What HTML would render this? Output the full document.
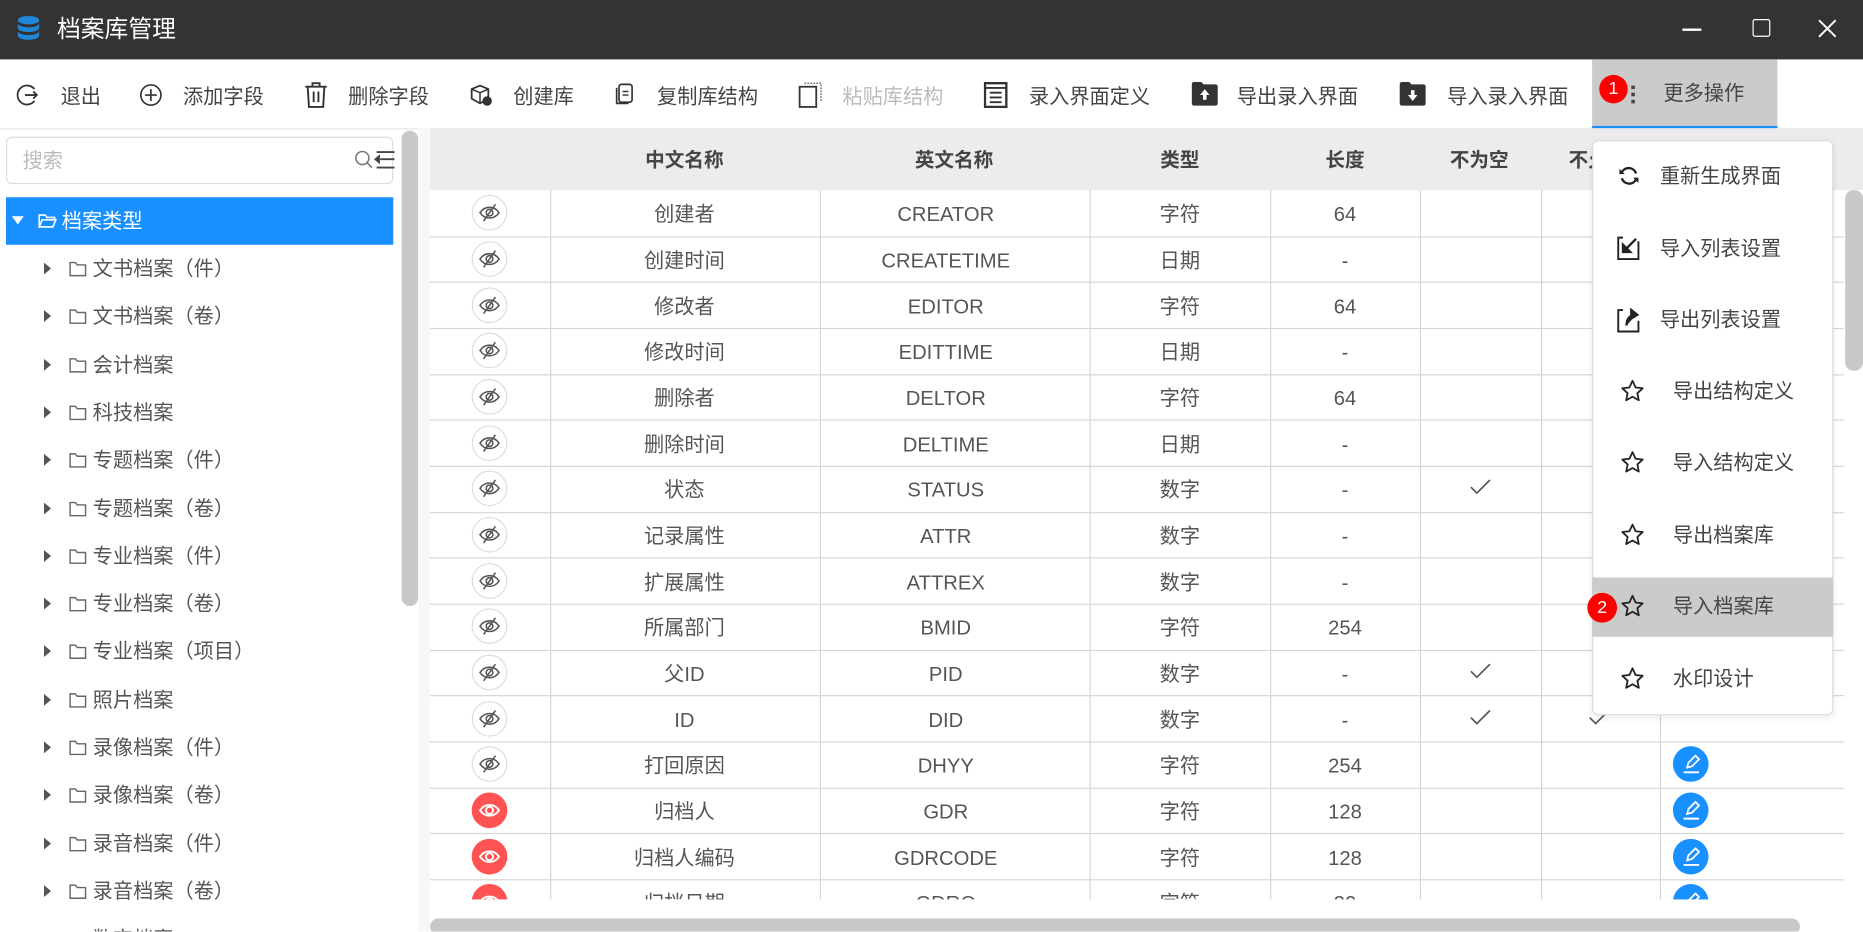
<!DOCTYPE html>
<html><head><meta charset="utf-8">
<style>
*{margin:0;padding:0;box-sizing:border-box}
html,body{width:1863px;height:932px;overflow:hidden;background:#fff}
#w{position:absolute;left:0;top:0;width:1568px;height:784px;transform:scale(1.18814);transform-origin:0 0;font-family:"Liberation Sans","Noto Sans CJK SC",sans-serif;color:#555;overflow:hidden;line-height:22px}
.a{position:absolute}
.tb{font-size:17px;color:#444;top:71px;white-space:nowrap}
.ic{position:absolute;top:68px}
.tree{position:absolute;left:0;font-size:17px;color:#555;white-space:nowrap}
.tri{position:absolute;width:0;height:0;border-top:5px solid transparent;border-bottom:5px solid transparent;border-left:6px solid #555}
.hd{position:absolute;top:124px;font-size:16.5px;font-weight:bold;color:#444;transform:translateX(-50%);white-space:nowrap}
.c{position:absolute;font-size:17px;color:#555;transform:translateX(-50%);white-space:nowrap;line-height:22px;height:22px}
.hl{position:absolute;left:362px;width:1190px;height:1px;background:#d6d6d6}
.vl{position:absolute;top:160px;width:1px;height:597px;background:#d6d6d6}
.eye{position:absolute;left:397px;width:30px;height:30px;border-radius:50%;border:1px solid #ddd;background:#fff}
.eye.r{background:#ff5252;border-color:#ff5252}
.ed{position:absolute;left:1408px;width:30px;height:30px;border-radius:50%;background:#1890ff}
.mi{position:absolute;font-size:17px;color:#444;white-space:nowrap}
</style></head><body><div id="w">
<div class="a" style="left:0;top:0;width:1568px;height:50px;background:#333"></div>
<svg class="a" style="left:14px;top:13px" width="20" height="24" viewBox="0 0 20 24"><g fill="#1e88d6"><ellipse cx="10" cy="4" rx="9" ry="3.5"/><path d="M1 6.5c0 2 4 3.5 9 3.5s9-1.5 9-3.5v4c0 2-4 3.5-9 3.5s-9-1.5-9-3.5z"/><path d="M1 13c0 2 4 3.5 9 3.5s9-1.5 9-3.5v4c0 2-4 3.5-9 3.5s-9-1.5-9-3.5z"/></g></svg>
<div class="a" style="left:48px;top:14px;font-size:20px;color:#fff">档案库管理</div>
<div class="a" style="left:1416px;top:24px;width:16px;height:1.5px;background:#fff"></div>
<div class="a" style="left:1475px;top:16px;width:15px;height:15px;border:1.5px solid #fff;border-radius:2px"></div>
<svg class="a" style="left:1530px;top:16px" width="16" height="16"><path d="M1 1L15 15M15 1L1 15" stroke="#fff" stroke-width="1.6"/></svg>
<svg class="ic" style="left:14px;top:70px" width="20" height="20"><path d="M15 5A8 8 0 1 0 15 15" fill="none" stroke="#333" stroke-width="1.5"/><path d="M7 10h10M14 7l3 3-3 3" fill="none" stroke="#333" stroke-width="1.5"/></svg>
<div class="a tb" style="left:51px">退出</div>
<svg class="ic" style="left:117px;top:70px" width="20" height="20"><circle cx="10" cy="10" r="8.5" fill="none" stroke="#333" stroke-width="1.4"/><path d="M10 5v10M5 10h10" stroke="#333" stroke-width="1.4"/></svg>
<div class="a tb" style="left:154px">添加字段</div>
<svg class="ic" style="left:256px;top:69px" width="20" height="22"><path d="M1 4h18M7 4V1h6v3M3 4l1 17h12l1-17M8 8v9M12 8v9" fill="none" stroke="#333" stroke-width="1.6"/></svg>
<div class="a tb" style="left:293px">删除字段</div>
<svg class="ic" style="left:395px;top:70px" width="20" height="20"><path d="M2 5l7-3 7 3v8l-7 4-7-4z" fill="#fff" stroke="#333" stroke-width="1.5"/><path d="M2 5l7 3 7-3M9 8v9" stroke="#333" stroke-width="1.3" fill="none"/><circle cx="15" cy="15" r="4" fill="#333"/></svg>
<div class="a tb" style="left:432px">创建库</div>
<svg class="ic" style="left:516px;top:70px" width="18" height="20"><rect x="5" y="1" width="11" height="15" rx="2" fill="none" stroke="#333" stroke-width="1.4"/><path d="M3 4v13h10" fill="none" stroke="#333" stroke-width="1.4"/><path d="M8 7h5M8 10h5" stroke="#333" stroke-width="1.2"/></svg>
<div class="a tb" style="left:553px">复制库结构</div>
<svg class="ic" style="left:672px;top:69px" width="20" height="22"><rect x="1" y="4" width="14" height="17" fill="none" stroke="#333" stroke-width="1.5"/><path d="M5 1h14v15" fill="none" stroke="#555" stroke-width="1" stroke-dasharray="1.5 1"/></svg>
<div class="a tb" style="left:709px;color:#bbb">粘贴库结构</div>
<svg class="ic" style="left:828px;top:69px" width="20" height="22"><rect x="1" y="1" width="18" height="20" fill="none" stroke="#333" stroke-width="2"/><path d="M1 5h18M5 9h10M5 13h10M5 17h10" stroke="#333" stroke-width="1.5"/></svg>
<div class="a tb" style="left:866px">录入界面定义</div>
<svg class="ic" style="left:1003px;top:69px" width="22" height="20"><path d="M0 2a2 2 0 0 1 2-2h6l2 2h10a2 2 0 0 1 2 2v14a2 2 0 0 1-2 2H2a2 2 0 0 1-2-2z" fill="#333"/><path d="M11 6l-4 5h2.5v4h3v-4H15z" fill="#fff"/></svg>
<div class="a tb" style="left:1041px">导出录入界面</div>
<svg class="ic" style="left:1178px;top:69px" width="22" height="20"><path d="M0 2a2 2 0 0 1 2-2h6l2 2h10a2 2 0 0 1 2 2v14a2 2 0 0 1-2 2H2a2 2 0 0 1-2-2z" fill="#333"/><path d="M11 16l-4-5h2.5V7h3v4H15z" fill="#fff"/></svg>
<div class="a tb" style="left:1218px">导入录入界面</div>
<div class="a" style="left:1340px;top:50px;width:156px;height:58px;background:#cbcbcb;border-bottom:2px solid #1890ff"></div>
<div class="a" style="left:1373px;top:72px;width:3px;height:3px;background:#444;box-shadow:0 6px #444,0 12px #444"></div>
<div class="a" style="left:1346px;top:63px;width:24px;height:24px;border-radius:50%;background:#f00;color:#fff;font-size:15px;text-align:center;line-height:24px">1</div>
<div class="a tb" style="left:1400px;top:68px">更多操作</div>
<div class="a" style="left:0;top:108px;width:1568px;height:1px;background:#e6e6e6"></div>
<div class="a" style="left:5px;top:115px;width:326px;height:40px;border:1px solid #ddd;border-radius:5px"></div>
<div class="a" style="left:19px;top:125px;font-size:17px;color:#bbb">搜索</div>
<svg class="a" style="left:298px;top:126px" width="36" height="20"><circle cx="7" cy="7" r="5.5" fill="none" stroke="#777" stroke-width="1.3"/><path d="M11 11l4 4" stroke="#777" stroke-width="1.3"/><path d="M19 2h15M22 8h12M19 15h15M18 8l3-2.5v5z" stroke="#444" stroke-width="1.6" fill="#444"/></svg>
<div class="a" style="left:5px;top:166px;width:326px;height:40px;background:#1890ff"></div>
<div class="a" style="left:10px;top:182px;width:0;height:0;border-left:5px solid transparent;border-right:5px solid transparent;border-top:7px solid #fff"></div>
<svg class="a" style="left:32px;top:179px" width="16" height="14"><path d="M1 12V2h5l1.5 2H14v2M1 12l2.5-6H15l-2.5 6z" fill="none" stroke="#fff" stroke-width="1.3"/></svg>
<div class="a" style="left:52px;top:176px;font-size:17px;color:#fff">档案类型</div>
<div class="a" style="left:338px;top:110px;width:14px;height:400px;border-radius:7px;background:#c8c8c8"></div>
<div class="a" style="left:352px;top:108px;width:10px;height:676px;background:#f7f7f7"></div>
<div id="tree"></div>
<div class="a" style="left:362px;top:108px;width:1206px;height:52px;background:#ececec"></div>
<div class="hd" style="left:576px">中文名称</div>
<div class="hd" style="left:803px">英文名称</div>
<div class="hd" style="left:993px">类型</div>
<div class="hd" style="left:1132px">长度</div>
<div class="hd" style="left:1245px">不为空</div>
<div class="hd" style="left:1345px">不允许</div>
<div id="tbl"></div>
<div class="a" style="left:1553px;top:160px;width:15px;height:152px;border-radius:7px;background:#c8c8c8"></div>
<div class="a" style="left:362px;top:773px;width:1153px;height:14px;border-radius:7px;background:#c8c8c8"></div>
<div class="a" style="left:1340px;top:118px;width:203px;height:484px;background:#fff;border:1px solid #ddd;border-radius:5px;box-shadow:0 2px 6px rgba(0,0,0,.08)"></div>
<div class="a" style="left:1340px;top:486px;width:203px;height:50px;background:#cbcbcb"></div>
<svg class="a" style="left:1362px;top:139px" width="18" height="18"><path d="M15 7A6.5 6.5 0 0 0 3 6M3 11A6.5 6.5 0 0 0 15 12" fill="none" stroke="#222" stroke-width="2"/><path d="M1 3v4.5h4.5zM17 15v-4.5h-4.5z" fill="#222"/></svg>
<div class="mi" style="left:1397px;top:138px">重新生成界面</div>
<svg class="a" style="left:1360px;top:198px" width="22" height="22"><path d="M6 2H2v18h17V5" fill="none" stroke="#222" stroke-width="1.6"/><path d="M17 3L9 11M6 8v6h6z" stroke="#222" stroke-width="2" fill="#222"/></svg>
<div class="mi" style="left:1397px;top:199px">导入列表设置</div>
<svg class="a" style="left:1360px;top:257px" width="22" height="24"><path d="M6 4H2v18h17V13" fill="none" stroke="#222" stroke-width="1.6"/><path d="M9 17c0-6 3-9 8-9M13 4l5 4-5 3z" stroke="#222" stroke-width="2" fill="#222"/></svg>
<div class="mi" style="left:1397px;top:259px">导出列表设置</div>
<div id="menu"></div>
<div class="a" style="left:1336px;top:499px;width:25px;height:25px;border-radius:50%;background:#f00;color:#fff;font-size:15px;text-align:center;line-height:25px">2</div>
</div>
<script>
var star='<path d="M10 1.5l2.6 5.6 6 .7-4.5 4.1 1.2 6L10 14.9 4.7 17.9l1.2-6L1.4 7.8l6-.7z" fill="none" stroke="#222" stroke-width="1.5" stroke-linejoin="round"/>';
var m=[["导出结构定义",330],["导入结构定义",390],["导出档案库",451],["导入档案库",511],["水印设计",572]],h='';
m.forEach(function(x){h+='<svg class="a" style="left:1364px;top:'+(x[1]-11)+'px" width="22" height="22">'+star+'</svg><div class="mi" style="left:1408px;top:'+(x[1]-11)+'px">'+x[0]+'</div>';});
document.getElementById('menu').innerHTML=h;
var t=["文书档案（件）","文书档案（卷）","会计档案","科技档案","专题档案（件）","专题档案（卷）","专业档案（件）","专业档案（卷）","专业档案（项目）","照片档案","录像档案（件）","录像档案（卷）","录音档案（件）","录音档案（卷）","数字档案"];h='';
t.forEach(function(s,i){var y=226+i*40.3;h+='<div class="tri" style="left:37px;top:'+(y-5)+'px"></div><svg class="a" style="left:58px;top:'+(y-6)+'px" width="15" height="13"><path d="M1 12V1h4.5l1.5 2h7v9z" fill="none" stroke="#666" stroke-width="1.2"/></svg><div class="tree" style="left:78px;top:'+(y-10)+'px">'+s+'</div>';});
document.getElementById('tree').innerHTML=h;
var r=[["创建者","CREATOR","字符","64","",""],["创建时间","CREATETIME","日期","-","",""],["修改者","EDITOR","字符","64","",""],["修改时间","EDITTIME","日期","-","",""],["删除者","DELTOR","字符","64","",""],["删除时间","DELTIME","日期","-","",""],["状态","STATUS","数字","-","1",""],["记录属性","ATTR","数字","-","",""],["扩展属性","ATTREX","数字","-","",""],["所属部门","BMID","字符","254","",""],["父ID","PID","数字","-","1",""],["ID","DID","数字","-","1","1"],["打回原因","DHYY","字符","254","",""],["归档人","GDR","字符","128","",""],["归档人编码","GDRCODE","字符","128","",""],["归档日期","GDRQ","字符","32","",""]];
var RH=38.67;h='';
var chk='<svg width="18" height="14"><path d="M1 7l5 5L17 1" fill="none" stroke="#555" stroke-width="1.4"/></svg>';
var eyeS='<svg width="30" height="30" style="position:absolute;left:-1px;top:-1px"><path d="M7 15c4-6 12-6 16 0c-4 6-12 6-16 0z" fill="none" stroke="#555" stroke-width="1.3"/><circle cx="15" cy="15" r="2.8" fill="none" stroke="#555" stroke-width="1.3"/><path d="M20 8L10 22" stroke="#555" stroke-width="1.3"/></svg>';
var eyeR='<svg width="30" height="30" style="position:absolute;left:-1px;top:-1px"><path d="M7 15c4-6 12-6 16 0c-4 6-12 6-16 0z" fill="none" stroke="#fff" stroke-width="1.6"/><circle cx="15" cy="15" r="3" fill="none" stroke="#fff" stroke-width="1.6"/></svg>';
var pen='<svg width="30" height="30"><path d="M12 18l1-4 6-6 3 3-6 6z" fill="none" stroke="#fff" stroke-width="1.5"/><path d="M9 22h13" stroke="#fff" stroke-width="1.6"/></svg>';
r.forEach(function(x,i){var y0=160+i*RH,cy=y0+RH/2,ty=(cy-9).toFixed(1);
 h+='<div class="hl" style="top:'+(y0+RH).toFixed(1)+'px"></div>';
 var red=i>=13;h+='<div class="eye'+(red?' r':'')+'" style="top:'+(cy-15)+'px">'+(red?eyeR:eyeS)+'</div>';
 h+='<div class="c" style="left:576px;top:'+ty+'px">'+x[0]+'</div><div class="c" style="left:796px;top:'+ty+'px">'+x[1]+'</div><div class="c" style="left:993px;top:'+ty+'px">'+x[2]+'</div><div class="c" style="left:1132px;top:'+ty+'px">'+x[3]+'</div>';
 if(x[4])h+='<div class="c" style="left:1246px;top:'+(cy-8)+'px;height:14px;line-height:14px">'+chk+'</div>';
 if(x[5])h+='<div class="c" style="left:1346px;top:'+(cy-8)+'px;height:14px;line-height:14px">'+chk+'</div>';
 if(i>=12)h+='<div class="ed" style="top:'+(cy-15)+'px">'+pen+'</div>';
});
[463,690,917,1069,1195,1297,1397].forEach(function(x){h+='<div class="vl" style="left:'+x+'px"></div>';});
h+='<div class="a" style="left:362px;top:757px;width:1206px;height:27px;background:#fff"></div>';
document.getElementById('tbl').innerHTML=h;
</script>
</body></html>
